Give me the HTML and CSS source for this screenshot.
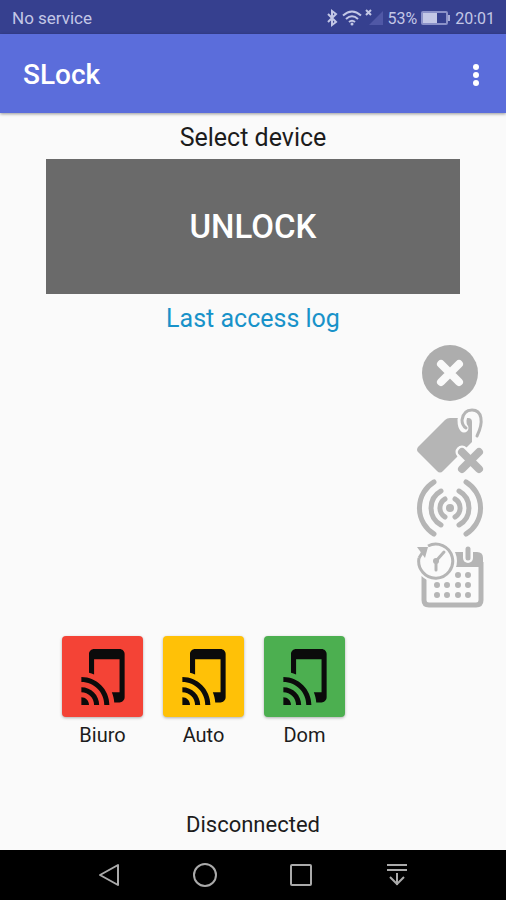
FILE: index.html
```html
<!DOCTYPE html>
<html lang="en">
<head>
<meta charset="utf-8">
<meta name="viewport" content="width=device-width, initial-scale=1">
<title>SLock</title>
<link rel="stylesheet" href="styles.css">
</head>
<body>
<div class="status-bar">
  <span>No service</span>
  <div class="status-icons">
    <svg width="13" height="18" viewBox="0 0 13 18" fill="none" stroke="currentColor" stroke-width="2"><path d="M2 5l8 8-4 3V2l4 3-8 8"/></svg>
    <svg width="20" height="18" viewBox="0 0 20 18" fill="none" stroke="currentColor" stroke-width="2"><path d="M1 6.500q9-8 18 0M4 10q6-5.500 12 0M7 13q3-2.500 6 0"/><circle cx="10" cy="15" r="1.500" fill="currentColor" stroke="none"/></svg>
    <svg width="19" height="18" viewBox="0 0 19 18"><path d="M18 2v14H4z" fill="#5058a6"/><path d="M1 1l5 5M6 1L1 6" stroke="currentColor" stroke-width="2"/></svg>
    <span>53%</span>
    <svg class="battery" width="30" height="18" viewBox="0 0 30 18"><rect x="1" y="3" width="25" height="12" rx="1" fill="none" stroke="#8b91c8" stroke-width="2"/><path d="M2 4h14v10H2z" fill="currentColor"/><path d="M27 6h2v6h-2z" fill="#a5aad6"/></svg>
    <span>20:01</span>
  </div>
</div>
<header class="app-bar">
  <h1>SLock</h1>
  <button class="menu" type="button" aria-label="More options"><svg width="8" height="24" viewBox="0 0 8 24" fill="#fff"><circle cx="4" cy="4" r="3"/><circle cx="4" cy="12" r="3"/><circle cx="4" cy="20" r="3"/></svg></button>
</header>
<main>
  <p class="prompt">Select device</p>
  <button class="unlock" type="button">UNLOCK</button>
  <a class="log" href="#">Last access log</a>
  <div class="tools">
    <button type="button" aria-label="Cancel"><svg viewBox="0 0 68 68"><circle cx="34" cy="35" r="28" fill="#adadad"/><path d="M25 26l18 18M43 26L25 44" stroke="#fafafa" stroke-width="8" stroke-linecap="round"/></svg></button>
    <button type="button" aria-label="Remove tag"><svg viewBox="0 0 68 68">
      <path d="M2 41L29 14q2-2 5-2h18q4 0 4 4v20L27 65q-3 3-6 0L2 46q-2-2 0-5z" fill="#b5b5b5"/>
      <path d="M48 22c-2-2-2-5-2-8C47 7 50 4 56 4" fill="none" stroke="#fafafa" stroke-width="9" stroke-linecap="round"/>
      <path d="M62 18q-1 7-3 11" fill="none" stroke="#fafafa" stroke-width="6"/>
      <path d="M50 22c-3-2-4-4-4-8C47 7 50 4 56 4c10 0 12 12 5 26" fill="none" stroke="#b5b5b5" stroke-width="3" stroke-linecap="round"/>
      <path d="M46 46l17 17M63 46L46 63" stroke="#fafafa" stroke-width="13" stroke-linecap="round"/>
      <path d="M46 46l17 17M63 46L46 63" stroke="#b5b5b5" stroke-width="8" stroke-linecap="round"/></svg></button>
    <button type="button" aria-label="Signal"><svg viewBox="0 0 68 68" fill="none" stroke="#b5b5b5" stroke-width="5" stroke-linecap="round"><circle cx="34" cy="34" r="4" fill="#b5b5b5" stroke="none"/><path d="M29 25a10.500 10.500 0 0 0 0 18M39 25a10.500 10.500 0 0 1 0 18M25 17a19.500 19.500 0 0 0 0 34M43 17a19.500 19.500 0 0 1 0 34M18 8a30.500 30.500 0 0 0 0 52M50 8a30.500 30.500 0 0 1 0 52"/></svg></button>
    <button type="button" aria-label="Access schedule"><svg viewBox="0 0 68 68">
      <path d="M8 34v24q0 5 5 5h47q5 0 5-5V20" fill="none" stroke="#b5b5b5" stroke-width="5"/>
      <path d="M38 10h23q6 0 6 6v9H38z" fill="#b5b5b5"/>
      <path d="M52 7v9" stroke="#fafafa" stroke-width="10" stroke-linecap="round"/><path d="M52 7v9" stroke="#b5b5b5" stroke-width="5" stroke-linecap="round"/>
      <circle cx="20" cy="19" r="21" fill="#fafafa"/>
      <path d="M12 4a17 17 0 1 1-9 12" fill="none" stroke="#b5b5b5" stroke-width="3"/>
      <path d="M1 5h11L9 16z" fill="#b5b5b5"/><path d="M3 16l5-8" stroke="#b5b5b5" stroke-width="3"/><path d="M28 10l-8 9v9" fill="none" stroke="#b5b5b5" stroke-width="3" stroke-linecap="round"/><circle cx="20" cy="19" r="3" fill="#b5b5b5"/>
      <path d="M42 33h0M52 33h0M21 43h0M31 43h0M42 43h0M52 43h0M21 53h0M31 53h0M42 53h0M52 53h0" stroke="#b5b5b5" stroke-width="6" stroke-linecap="round"/></svg></button>
  </div>
  <svg class="sprite" aria-hidden="true"><symbol id="tap" viewBox="2 1 17 22"><path d="M2 16v2c2.760 0 5 2.240 5 5h2c0-3.870-3.130-7-7-7zm0 4v3h3c0-1.660-1.340-3-3-3zm0-8v2c4.970 0 9 4.030 9 9h2c0-6.080-4.920-11-11-11zM17 1.010L7 1c-1.100 0-2 .9-2 2v7.370c.69.160 1.360.370 2 .640V5h10v13h-3.030c.52 1.250.840 2.590.950 4H17c1.100 0 2-.9 2-2V3c0-1.100-.9-1.990-2-1.990z"/></symbol></svg>
  <div class="devices">
    <button class="device" type="button"><span class="tile red"><svg><use href="#tap"/></svg></span>Biuro</button>
    <button class="device" type="button"><span class="tile amber"><svg><use href="#tap"/></svg></span>Auto</button>
    <button class="device" type="button"><span class="tile green"><svg><use href="#tap"/></svg></span>Dom</button>
  </div>
  <p class="state">Disconnected</p>
</main>
<nav class="nav-bar">
  <button type="button" aria-label="Back"><svg viewBox="0 0 26 26"><path d="M22 3v20L4 13z" stroke-linejoin="round"/></svg></button>
  <button type="button" aria-label="Home"><svg viewBox="0 0 26 26"><circle cx="13" cy="13" r="11"/></svg></button>
  <button type="button" aria-label="Recent apps"><svg viewBox="0 0 26 26"><rect x="3" y="3" width="20" height="20" rx="1"/></svg></button>
  <button type="button" aria-label="Notifications"><svg viewBox="0 0 26 26"><path d="M3 3h20M3 8h20M13 11v12M6 15l7 7 7-7"/></svg></button>
</nav>
</body>
</html>
```

FILE: styles.css
```css
* { box-sizing: border-box; }

body {
  margin: 0;
  min-height: 100vh;
  display: flex;
  flex-direction: column;
  background: #fafafa;
  color: #1c1c1c;
  font-family: Roboto, "Liberation Sans", sans-serif;
}

h1, p { margin: 0; }

button {
  padding: 0;
  border: 0;
  background: none;
  color: inherit;
  font: inherit;
  cursor: pointer;
}

svg { display: block; }

.status-bar {
  display: flex;
  align-items: center;
  justify-content: space-between;
  height: 34px;
  padding: 2px 11px 0 12px;
  background: #36408f;
  color: #c3c7e6;
  font-size: 17px;
}

.status-icons {
  display: flex;
  align-items: center;
  gap: 3px;
  font-size: 16px;
}

.battery { margin: 0 1px; }

.app-bar {
  display: flex;
  align-items: center;
  justify-content: space-between;
  height: 79px;
  padding: 2px 26px 0 23px;
  background: #5b6ddb;
  color: #fff;
  box-shadow: 0 1px 3px rgba(0, 0, 0, 0.4);
}

.app-bar h1 {
  font-size: 28px;
  font-weight: 500;
  line-height: 32px;
}

main {
  flex: 1;
  display: flex;
  flex-direction: column;
  padding-top: 9px;
}

.prompt {
  text-align: center;
  font-size: 25px;
  line-height: 32px;
}

.unlock {
  height: 135px;
  margin: 5px 9% 0;
  background: #6a6a6a;
  color: #fff;
  font-size: 33px;
  font-weight: 500;
}

.log {
  align-self: center;
  margin-top: 9px;
  color: #1892c9;
  font-size: 25px;
  line-height: 32px;
  text-decoration: none;
}

.tools {
  align-self: flex-end;
  display: grid;
  width: 68px;
  margin: 3px 22px 0 0;
}

.tools svg {
  width: 68px;
  height: 68px;
}

.sprite {
  width: 0;
  height: 0;
}

.devices {
  display: flex;
  gap: 20px;
  padding: 0 62px;
  margin-top: 26px;
}

.device {
  display: grid;
  gap: 6px;
  width: 81px;
  font-size: 20px;
  line-height: 24px;
}

.tile {
  display: grid;
  place-items: center;
  height: 81px;
  border-radius: 4px;
  box-shadow: 0 1px 3px rgba(0, 0, 0, 0.3);
  color: #0b0b0b;
}

.tile svg {
  width: 44px;
  height: 56px;
  fill: currentColor;
}

.red { background: #f44336; }
.amber { background: #ffc107; }
.green { background: #4caf50; }

.state {
  margin-top: auto;
  padding-bottom: 11px;
  text-align: center;
  font-size: 22px;
  line-height: 28px;
}

.nav-bar {
  display: flex;
  justify-content: space-between;
  height: 50px;
  padding: 0 12%;
  background: #000;
}

.nav-bar button {
  flex: 1;
  display: grid;
  place-items: center;
}

.nav-bar svg {
  width: 26px;
  height: 26px;
  fill: none;
  stroke: #aaa;
  stroke-width: 2;
}
```
